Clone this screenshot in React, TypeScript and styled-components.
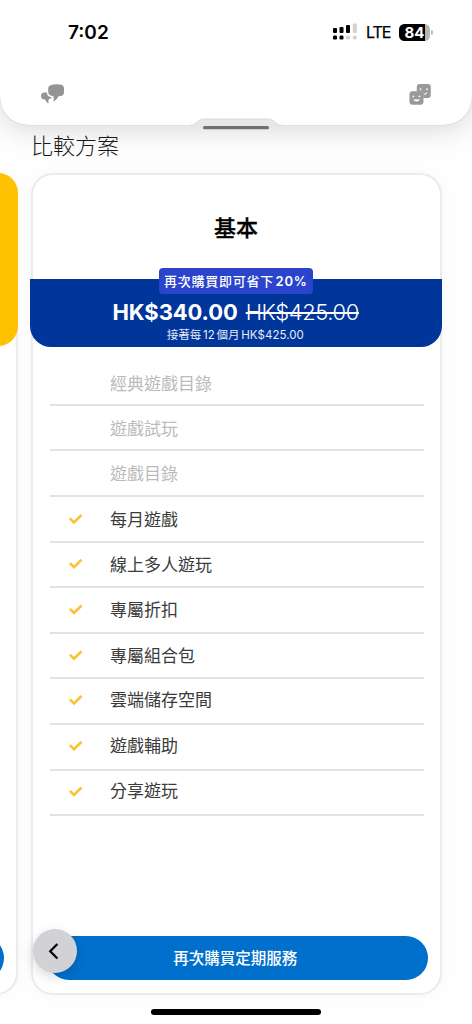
import React from "react";
import styled, { createGlobalStyle } from "styled-components";

const GlobalStyle = createGlobalStyle`
  * { box-sizing: border-box; }
  html, body { margin: 0; padding: 0; background: #fff; overflow: hidden; }
  body { font-family: Inter, "Noto Sans CJK TC", sans-serif; color: #000; }
`;

const Screen = styled.div`
  position: relative;
  width: 472px;
  height: 1024px;
  overflow: hidden;
  display: flex;
  flex-direction: column;
  background: #fefefe;
`;

const Header = styled.header`
  position: relative;
  flex: none;
  height: 125px;
  border-radius: 0 0 28px 28px;
  background: #fff;
  box-shadow: 0 0 1px rgba(0, 0, 0, 0.3), 0 5px 28px rgba(0, 0, 0, 0.15);
`;

const StatusBar = styled.div`
  display: flex;
  align-items: center;
  justify-content: space-between;
  height: 64px;
  padding: 0 39px 0 68px;
`;

const Time = styled.div`
  padding-top: 1px;
  font-size: 19px;
  font-weight: 600;
  line-height: 24px;
`;

const StatusIcons = styled.div`
  display: flex;
  align-items: center;
`;

const Network = styled.span`
  margin: 0 9px 1px 9px;
  font-size: 16px;
  line-height: 20px;
  width: 24px;
  letter-spacing: -1px;
  -webkit-text-stroke: 0.25px #000;
`;

const Battery = styled.div`
  display: flex;
  align-items: center;
`;

const BatteryBody = styled.div`
  width: 31px;
  height: 17px;
  border-radius: 5.5px;
  background: linear-gradient(90deg, #000 84%, #b5b5b5 84%);
  color: #fff;
  font-size: 15px;
  font-weight: 700;
  line-height: 17px;
  text-align: center;
`;

const BatteryTip = styled.div`
  width: 2px;
  height: 5px;
  margin-left: 1px;
  border-radius: 0 2px 2px 0;
  background: #bbb;
`;

const Toolbar = styled.div`
  display: flex;
  justify-content: space-between;
  padding: 19px 41.5px 0 41px;
`;

const HandleTab = styled.div`
  position: absolute;
  left: 190px;
  top: 118px;
  width: 92px;
  height: 12px;
  svg { display: block; }
`;

const Title = styled.h1`
  margin: 5px 0 0 31px;
  font-size: 22px;
  font-weight: 300;
  line-height: 32px;
  color: #1a1a1a;
`;

const Carousel = styled.main`
  display: flex;
  gap: 13px;
  margin: 11px 0 0 -393.5px;
`;

const Card = styled.section`
  flex: none;
  width: 411px;
  height: 822px;
  display: flex;
  flex-direction: column;
  border: 2px solid #ebebec;
  border-radius: 22px;
  background: #fff;
  box-shadow: 0 0 12px rgba(0, 0, 0, 0.035);
`;

const YellowPanel = styled.div`
  height: 172.5px;
  margin: -2px -2px 0;
  border-radius: 20px;
  background: #ffc200;
`;

const PlanName = styled.h2`
  margin: 0;
  height: 104px;
  padding: 37px 0 0 0;
  font-size: 22px;
  line-height: 32px;
  font-weight: 500;
  -webkit-text-stroke: 0.3px #000;
  text-align: center;
`;

const PriceBand = styled.div`
  height: 67.5px;
  margin: 0 -2.5px 0 -3px;
  border-radius: 0 0 21px 21px;
  background: #003599;
  color: #fff;
  display: flex;
  flex-direction: column;
  align-items: center;
`;

const Badge = styled.div`
  flex: none;
  width: 154px;
  height: 26px;
  margin: -11.5px 0 -0.5px;
  border-radius: 4px;
  background: #2a44cc;
  font-size: 13px;
  line-height: 26px;
  font-weight: 500;
  letter-spacing: 0.75px;
  word-spacing: -2.6px;
  text-align: center;
  white-space: nowrap;
  b { font-weight: 600; }
`;

const Prices = styled.div`
  display: flex;
  gap: 8px;
  height: 34px;
  line-height: 38px;
  font-size: 22px;
  white-space: nowrap;
`;

const Price = styled.strong`
  font-weight: 650;
  letter-spacing: -0.1px;
`;

const OldPrice = styled.s`
  font-weight: 300;
  letter-spacing: -0.4px;
  text-decoration-thickness: 1.5px;
`;

const Renewal = styled.div`
  margin-right: 1px;
  font-size: 11.5px;
  line-height: 17px;
  letter-spacing: 0.05px;
  word-spacing: -1.6px;
  color: #e6ecf8;
  white-space: nowrap;
`;

const Features = styled.ul`
  margin: 13.5px 15.5px 0 17px;
  padding: 0;
  list-style: none;
`;

const Feature = styled.li<{ $included: boolean }>`
  height: 45.65px;
  display: grid;
  grid-template-columns: 60.5px 1fr;
  align-items: center;
  border-bottom: 2px solid #e2e2e3;
  font-size: 17px;
  line-height: 24px;
  font-weight: 400;
  color: ${(p) => (p.$included ? "#3b3b3b" : "#bbb")};
  svg { margin-left: 18.5px; }
`;

const FeatureCell = styled.span<{ $shift: number }>`
  transform: translateY(${(p) => p.$shift}px);
`;

const BuyButton = styled.button`
  height: 44px;
  margin: auto 11.5px 13px 14px;
  padding: 0 4px 0 0;
  border: 0;
  border-radius: 22px;
  background: #0070cc;
  color: #fff;
  font-family: inherit;
  font-size: 15.5px;
  font-weight: 500;
  line-height: 43px;
`;

const BackButton = styled.button`
  position: absolute;
  left: 33px;
  top: 929px;
  width: 44px;
  height: 44px;
  padding: 0;
  border: 0;
  border-radius: 50%;
  background: #d1d1d6;
  box-shadow: 0 4px 12px rgba(0, 0, 0, 0.15);
  svg { display: block; }
`;

const HomeIndicator = styled.div`
  position: absolute;
  left: 151px;
  top: 1009px;
  width: 170px;
  height: 6px;
  border-radius: 3px;
  background: #000;
`;

const features = [
  { name: "經典遊戲目錄", included: false },
  { name: "遊戲試玩", included: false },
  { name: "遊戲目錄", included: false },
  { name: "每月遊戲", included: true },
  { name: "線上多人遊玩", included: true },
  { name: "專屬折扣", included: true },
  { name: "專屬組合包", included: true },
  { name: "雲端儲存空間", included: true },
  { name: "遊戲輔助", included: true },
  { name: "分享遊玩", included: true },
];

const Signal = () => (
  <svg width="24" height="18" viewBox="0 0 24 18">
    <rect x="0" y="5" width="4" height="5" rx="1" />
    <rect x="6.5" y="4" width="4" height="6" rx="1" />
    <rect x="13" y="2" width="4" height="8" rx="1" />
    <rect x="19.8" y="0.5" width="4" height="9.5" rx="1" fill="#d2d2d2" />
    <rect x="0" y="12.5" width="4" height="4" rx="1.2" />
    <rect x="6.5" y="12.5" width="4" height="4" rx="1.2" />
    <rect x="13" y="12.5" width="4" height="4" rx="1.6" fill="#d2d2d2" />
    <rect x="19.8" y="12.5" width="4" height="4" rx="1.6" fill="#d2d2d2" />
  </svg>
);

const ChatIcon = () => (
  <svg width="24" height="22" viewBox="0 0 24 22" fill="#929496">
    <path d="M12.5 1.6Q15.3 1.2 18.3 1.5Q23 1.6 23 5.5V9Q23 12.8 19.2 13.1L17.6 13.3Q16 16.8 12.4 18.7Q13 16 12.6 13.2Q7.2 12.8 7.2 8.8V5.6Q7.2 2 12.5 1.6Z" />
    <path d="M5.9 9.5Q6 14 10.8 14.2Q9.9 15.7 7.9 16.1Q7 17.9 7.5 20.4Q5 19.2 4.1 16.5Q0 16.5 0 13Q0 9.6 3.5 9.4Z" />
  </svg>
);

const FacesIcon = () => (
  <svg width="22" height="22" viewBox="0 0 22 22">
    <rect x="7.8" y="1" width="14" height="14" rx="3" fill="#97999b" />
    <rect x="0.5" y="8.2" width="14" height="13.6" rx="3" fill="#97999b" />
    <path d="M7.4 8H11Q14.6 8 14.6 11.6V14.8" fill="none" stroke="#b4b5b7" strokeWidth="0.6" />
    <g fill="#fff">
      <circle cx="4.4" cy="13.4" r="0.9" />
      <circle cx="10.5" cy="13.4" r="0.9" />
      <circle cx="11.6" cy="6.2" r="0.9" />
      <circle cx="18" cy="6.2" r="0.9" />
    </g>
    <path d="M4.6 16.8Q7.5 19.8 10.5 16.8Z" fill="#fff" stroke="#fff" strokeWidth="0.6" strokeLinejoin="round" />
    <path d="M15.2 11.4Q17.4 11.5 18 9.6Z" fill="#fff" stroke="#fff" strokeWidth="0.6" strokeLinejoin="round" />
  </svg>
);

const Check = () => (
  <svg width="16" height="14" viewBox="0 0 16 14" fill="none" stroke="#fcc233" strokeWidth="2.7">
    <path d="M1.9 7.1L6 11.2L13.5 3.7" />
  </svg>
);

const App = () => (
  <>
    <GlobalStyle />
    <Screen>
      <Header>
        <StatusBar>
          <Time>7:02</Time>
          <StatusIcons>
            <Signal />
            <Network>LTE</Network>
            <Battery>
              <BatteryBody>84</BatteryBody>
              <BatteryTip />
            </Battery>
          </StatusIcons>
        </StatusBar>
        <Toolbar>
          <ChatIcon />
          <FacesIcon />
        </Toolbar>
        <HandleTab>
          <svg width="92" height="12" viewBox="0 0 92 12">
            <path d="M0 7.2C7 7.2 7 1 14 1H78C85 1 85 7.2 92 7.2V8H0Z" fill="#e7e7e9" />
            <path d="M0 7.2C7 7.2 7 1 14 1H78C85 1 85 7.2 92 7.2" fill="none" stroke="#d4d4d6" strokeWidth="0.8" />
            <rect x="13" y="8" width="66" height="3.2" rx="1.5" fill="#707071" />
          </svg>
        </HandleTab>
      </Header>
      <Title>比較方案</Title>
      <Carousel>
        <Card>
          <YellowPanel />
          <BuyButton />
        </Card>
        <Card>
          <PlanName>基本</PlanName>
          <PriceBand>
            <Badge>再次購買即可省下 <b>20%</b></Badge>
            <Prices>
              <Price>HK$340.00</Price>
              <OldPrice>HK$425.00</OldPrice>
            </Prices>
            <Renewal>接著每 12 個月 HK$425.00</Renewal>
          </PriceBand>
          <Features>
            {features.map((f, i) => (
              <Feature key={f.name} $included={f.included}>
                <FeatureCell $shift={1 - i * 0.25}>{f.included && <Check />}</FeatureCell>
                <FeatureCell $shift={2.3 - i * 0.45}>{f.name}</FeatureCell>
              </Feature>
            ))}
          </Features>
          <BuyButton>再次購買定期服務</BuyButton>
        </Card>
      </Carousel>
      <BackButton aria-label="返回">
        <svg width="44" height="44" viewBox="0 0 44 44" fill="none" stroke="#000" strokeWidth="2.2">
          <path d="M24.4 15L17.2 22.3L24.4 29.6" />
        </svg>
      </BackButton>
      <HomeIndicator />
    </Screen>
  </>
);

export default App;
